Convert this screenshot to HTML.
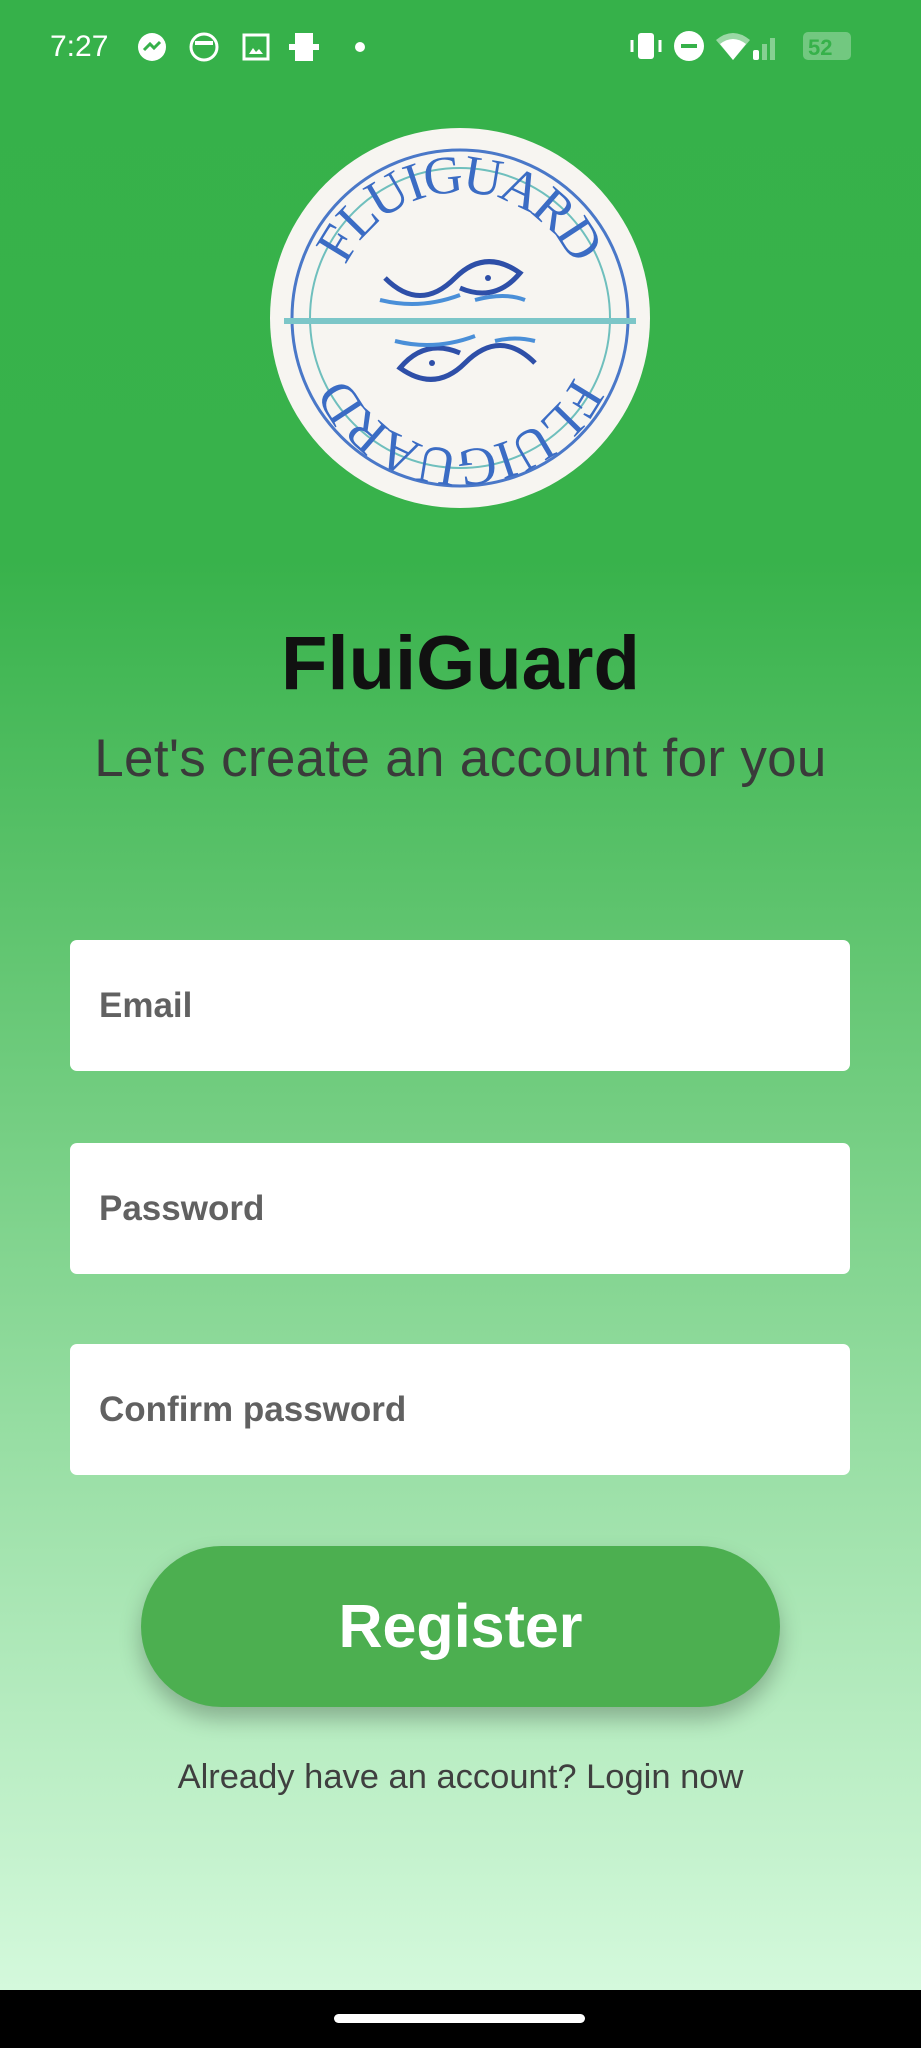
<!DOCTYPE html>
<html><head><meta charset="utf-8"><style>
*{margin:0;padding:0;box-sizing:border-box}
body{width:921px;height:2048px;position:relative;overflow:hidden;font-family:"Liberation Sans",sans-serif;
background:linear-gradient(to bottom,#36b14a 0px,#38b24b 560px,#72cd80 1100px,#a9e6b4 1600px,#d4f9dc 1990px);}
.sb{position:absolute;top:30px;color:#fff;font-size:30px}
.field{position:absolute;left:70px;width:780px;height:131px;background:#fff;border-radius:7px;font-size:35px;color:#616161;padding-left:29px;line-height:131px;font-weight:bold}
</style></head><body>
<div class="sb" style="left:50px">7:27</div>
<svg style="position:absolute;left:135px;top:30px" width="240" height="36" viewBox="0 0 240 36">
<circle cx="17" cy="17" r="14" fill="#fff"/><path d="M9 20l6-6 4 4 6-6-6 6-4-4z" stroke="#36b14a" stroke-width="3" fill="none"/>
<circle cx="69" cy="17" r="13" fill="none" stroke="#fff" stroke-width="3"/><path d="M60 13h18" stroke="#fff" stroke-width="4"/>
<rect x="109" y="5" width="24" height="24" fill="none" stroke="#fff" stroke-width="3"/><path d="M114 24l4-6 3 4 3-3 4 5z" fill="#fff"/>
<rect x="160" y="3" width="18" height="28" fill="#fff"/><rect x="154" y="14" width="30" height="6" fill="#fff"/>
<circle cx="225" cy="17" r="5" fill="#fff"/>
</svg>
<svg style="position:absolute;left:628px;top:28px" width="235" height="40" viewBox="0 0 235 40">
<rect x="10" y="5" width="16" height="26" rx="3" fill="#fff"/><path d="M4 12v12M32 12v12" stroke="#fff" stroke-width="3"/>
<circle cx="61" cy="18" r="15" fill="#fff"/><rect x="53" y="16" width="16" height="4" fill="#36b14a"/>
<path d="M88 12q17-14 34 0l-17 20z" fill="#fff" opacity=".5"/><path d="M92 16q13-10 26 0l-13 16z" fill="#fff"/>
<rect x="125" y="22" width="6" height="10" rx="2" fill="#fff"/><rect x="134" y="16" width="5" height="16" fill="#fff" opacity=".4"/><rect x="142" y="10" width="5" height="22" fill="#fff" opacity=".4"/>
<rect x="175" y="4" width="48" height="28" rx="5" fill="#fff" opacity=".3"/><text x="180" y="27" font-size="22" font-weight="bold" fill="#36b14a" font-family="Liberation Sans">52</text>
</svg>
<svg style="position:absolute;left:270px;top:128px" width="380" height="380" viewBox="0 0 380 380">
<circle cx="190" cy="190" r="190" fill="#f7f5f1"/>
<circle cx="190" cy="190" r="168" fill="none" stroke="#4a78c8" stroke-width="3"/>
<circle cx="190" cy="190" r="150" fill="none" stroke="#6fbfbd" stroke-width="2"/>
<rect x="14" y="190" width="352" height="6" fill="#7cc6c8"/>
<defs><path id="a1" d="M52 190a138 138 0 0 1 276 0"/></defs>
<text font-family="Liberation Serif" font-size="54" fill="#3b6cc4"><textPath href="#a1" startOffset="50%" text-anchor="middle" dominant-baseline="middle">FLUIGUARD</textPath></text>
<text font-family="Liberation Serif" font-size="54" fill="#3b6cc4" transform="rotate(180 190 193)"><textPath href="#a1" startOffset="50%" text-anchor="middle" dominant-baseline="middle">FLUIGUARD</textPath></text>
<path d="M115 150q35 35 70 0q30-30 65-5q-25 30-60 15" stroke="#2e4fa8" stroke-width="5" fill="none"/>
<circle cx="218" cy="150" r="3" fill="#2e4fa8"/>
<path d="M110 172q40 10 80-5M205 172q30-8 50 0" stroke="#4a8fd8" stroke-width="4" fill="none"/>
<path d="M265 235q-35-35-70 0q-30 30-65 5q25-30 60-15" stroke="#2e4fa8" stroke-width="5" fill="none"/>
<circle cx="162" cy="235" r="3" fill="#2e4fa8"/>
<path d="M125 213q40 10 80-5M225 213q20-5 40 0" stroke="#4a8fd8" stroke-width="4" fill="none"/>
</svg>
<div style="position:absolute;top:620px;width:100%;text-align:center;font-size:76px;font-weight:bold;color:#111">FluiGuard</div>
<div style="position:absolute;top:728px;width:100%;text-align:center;font-size:53px;color:#3a3a3a;letter-spacing:0.3px">Let's create an account for you</div>
<div class="field" style="top:940px">Email</div>
<div class="field" style="top:1143px">Password</div>
<div class="field" style="top:1344px">Confirm password</div>
<div style="position:absolute;left:141px;top:1546px;width:639px;height:161px;border-radius:81px;background:#4caf50;box-shadow:0 12px 22px rgba(0,0,0,.25);color:#fff;font-size:61px;font-weight:bold;text-align:center;line-height:161px">Register</div>
<div style="position:absolute;top:1758px;width:100%;text-align:center;font-size:34.5px;color:#3f3f3f">Already have an account? Login now</div>
<div style="position:absolute;left:0;top:1990px;width:921px;height:58px;background:#000"></div>
<div style="position:absolute;left:334px;top:2014px;width:251px;height:9px;border-radius:5px;background:#fff"></div>
</body></html>
